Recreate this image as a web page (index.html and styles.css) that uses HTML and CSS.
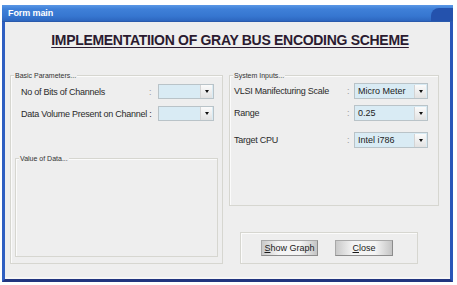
FILE: index.html
```html
<!DOCTYPE html>
<html lang="en">
<head>
  <meta charset="UTF-8" />
  <title>Form main</title>
  <link rel="stylesheet" href="styles.css">
</head>
<body>

  <div class="window">
    <div class="titlebar">
      <span class="title-text">Form main</span>
      <span class="title-corner"></span>
    </div>

    <div class="client">
      <h1 class="heading">IMPLEMENTATIION OF GRAY BUS ENCODING SCHEME</h1>

      <div class="panels">
        <div class="group group-basic">
          <span class="group-label">Basic Parameters...</span>
          <div class="field-grid basic-grid">
            <span class="field-label">No of Bits of Channels</span>
            <span class="field-colon">:</span>
            <div class="combo combo-short"><span class="combo-value"></span><span class="combo-btn"></span></div>

            <span class="field-label span-2">Data Volume Present on Channel :</span>
            <div class="combo combo-short"><span class="combo-value"></span><span class="combo-btn"></span></div>
          </div>

          <div class="group group-data">
            <span class="group-label">Value of Data...</span>
          </div>
        </div>

        <div class="right-col">
          <div class="group group-system">
            <span class="group-label">System Inputs...</span>
            <div class="field-grid system-grid">
              <span class="field-label">VLSI Manifecturing Scale</span>
              <span class="field-colon">:</span>
              <div class="combo combo-long"><span class="combo-value">Micro Meter</span><span class="combo-btn"></span></div>

              <span class="field-label">Range</span>
              <span class="field-colon">:</span>
              <div class="combo combo-long"><span class="combo-value">0.25</span><span class="combo-btn"></span></div>

              <span class="field-label row-gap">Target CPU</span>
              <span class="field-colon row-gap">:</span>
              <div class="combo combo-long row-gap"><span class="combo-value">Intel i786</span><span class="combo-btn"></span></div>
            </div>
          </div>

          <div class="group group-buttons">
            <button class="btn btn-graph"><u>S</u>how Graph</button>
            <button class="btn btn-close"><u>C</u>lose</button>
          </div>
        </div>
      </div>
    </div>
  </div>

</body>
</html>
```

FILE: styles.css
```css
body {
  margin: 0;
  padding: 5px 0 0 2px;
  background: #ffffff;
  font-family: 'Liberation Sans', Arial, sans-serif;
}

.window {
  width: 451px;
  box-sizing: border-box;
  border-left: 3px solid #2f5fc2;
  border-right: 3px solid #2a56b8;
  border-bottom: 3px solid #22357f;
}

.titlebar {
  height: 17px;
  margin-left: -3px;
  margin-right: -3px;
  display: flex;
  align-items: center;
  background: linear-gradient(#5a97e6 0%, #3f80d8 25%, #3676d0 70%, #2d66bf 100%);
  border-bottom: 1px solid #2a5aac;
  box-sizing: border-box;
}

.title-text {
  color: #ffffff;
  font-size: 9px;
  font-weight: bold;
  padding-left: 6px;
  letter-spacing: -0.1px;
}

.title-corner {
  margin-left: auto;
  width: 22px;
  height: 13px;
  margin-top: 3px;
  background: #2452ad;
  border-radius: 8px 0 0 0;
}

.client {
  background: #eeeeee;
  height: 257px;
  box-sizing: border-box;
  padding: 0 0 0 5px;
  border-bottom: 2px solid #f6f6f6;
}

.heading {
  margin: 0;
  padding-top: 10px;
  height: 53px;
  box-sizing: border-box;
  text-align: center;
  font-size: 14px;
  line-height: 16px;
  font-weight: bold;
  letter-spacing: -0.3px;
  color: #2b1b30;
  text-decoration: underline;
  text-underline-offset: 2px;
}

.panels {
  display: grid;
  grid-template-columns: 213px 210px;
  column-gap: 6px;
}

.group {
  position: relative;
  border: 1px solid #d6d6d0;
  box-shadow: inset 1px 1px 0 #fbfbfb;
}

.group-label {
  position: absolute;
  top: -5px;
  left: 3px;
  padding: 0 1px;
  background: #eeeeee;
  font-size: 7px;
  line-height: 9px;
  color: #333333;
  white-space: nowrap;
}

.group-basic {
  height: 189px;
  box-sizing: border-box;
  padding: 8px 4px 0 4px;
}

.field-grid {
  display: grid;
  align-items: center;
  row-gap: 7px;
  font-size: 9px;
  letter-spacing: -0.25px;
  color: #2a2a2a;
  white-space: nowrap;
}

.basic-grid {
  grid-template-columns: 128px 9px 56px;
  padding-left: 6px;
}

.span-2 {
  grid-column: span 2;
}

.field-colon {
  color: #999999;
}

.combo {
  height: 15px;
  box-sizing: border-box;
  border: 1px solid #b9c3c8;
  background: #d9ebf4;
  display: flex;
  align-items: center;
  letter-spacing: 0;
}

.combo-short {
  width: 56px;
}

.combo-long {
  width: 74px;
  height: 16px;
}

.combo-value {
  flex: 1;
  padding-left: 3px;
  font-size: 9px;
  color: #222222;
}

.combo-btn {
  width: 11px;
  height: 13px;
  margin-right: 1px;
  background: linear-gradient(#fbfbfb, #e2e2e2);
  border-left: 1px solid #d4d4d4;
  display: flex;
  align-items: center;
  justify-content: center;
}

.combo-btn::after {
  content: "";
  border-left: 2.5px solid transparent;
  border-right: 2.5px solid transparent;
  border-top: 3px solid #111111;
}

.group-data {
  margin-top: 37px;
  height: 97px;
}

.right-col {
  display: flex;
  flex-direction: column;
}

.group-system {
  height: 131px;
  box-sizing: border-box;
  padding: 7px 0 0 4px;
}

.system-grid {
  grid-template-columns: 113px 7px 74px;
  row-gap: 6px;
}

.row-gap {
  margin-top: 5px;
}

.group-buttons {
  margin-top: 26px;
  margin-left: 11px;
  width: 178px;
  height: 32px;
  box-sizing: border-box;
  display: flex;
  align-items: center;
  gap: 17px;
  padding-left: 20px;
}

.btn {
  height: 16px;
  padding: 0;
  border: 1px solid #a8a8a8;
  border-right-color: #8c8c8c;
  border-bottom-color: #8c8c8c;
  background: linear-gradient(90deg, #c9c9c9 0%, #f4f4f4 30%, #f4f4f4 70%, #c4c4c4 100%);
  font-family: 'Liberation Sans', Arial, sans-serif;
  font-size: 9px;
  color: #1a1a1a;
}

.btn-graph {
  width: 57px;
}

.btn-close {
  width: 58px;
}
```
